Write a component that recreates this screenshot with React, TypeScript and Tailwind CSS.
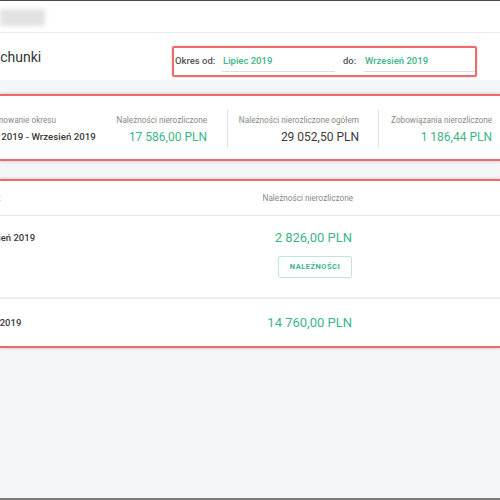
import React from "react";

const green = "text-[#3bb58a]";

export default function App() {
  return (
    <div
      className="w-[500px] h-[500px] overflow-hidden bg-[#f4f5f7] border-t border-[#4a4a4a] border-b-2 border-b-[#7a7a7a] flex flex-col"
      style={{ fontFamily: "Roboto, 'Noto Sans', sans-serif" }}
    >
      {/* top header */}
      <div className="h-[32px] shrink-0 bg-white border-b border-[#ececec] flex items-start">
        <div className="mt-[8px] w-[45px] h-[17px] bg-[#e2e2e2] blur-[2px] rounded-[2px]" />
      </div>

      {/* title bar */}
      <div className="h-[47px] shrink-0 bg-white flex items-start justify-between">
        <div className="mt-[14px] -ml-[16px] text-[14px] leading-[20px] text-[#333]">Rachunki</div>
        <div className="mt-[13px] mr-[23px] w-[305px] h-[31px] border-2 border-[#ee6b6b] rounded-[2px] shadow-[0_0_3px_rgba(0,0,0,0.2)] flex items-start text-[9.5px] font-medium">
          <span className="mt-[7px] ml-[1px] w-[47px] leading-[12px] text-[#555]">Okres od:</span>
          <div className="w-[113px] h-[24px] border-b-[1.5px] border-[#dedede] flex items-start">
            <span className={`mt-[7px] ml-[1px] leading-[12px] ${green}`}>Lipiec 2019</span>
          </div>
          <span className="mt-[7px] ml-[8px] w-[21px] leading-[12px] text-[#555]">do:</span>
          <div className="flex-1 h-[24px] border-b-[1.5px] border-[#dedede] flex items-start">
            <span className={`mt-[7px] ml-[1px] leading-[12px] ${green}`}>Wrzesień 2019</span>
          </div>
        </div>
      </div>

      {/* summary card */}
      <div className="mt-[14px] shrink-0 bg-white border-y-2 border-[#ec6a6a] shadow-[0_0_3px_rgba(0,0,0,0.25)]">
        <div className="h-[63px] flex items-start pt-[14px]">
          <div className="w-[137px] -ml-[27px] h-[37px] pt-[5px]">
            <div className="text-[8.2px] leading-[10px] text-[#888] whitespace-nowrap">Podsumowanie okresu</div>
            <div className="mt-[5px] text-[9.7px] leading-[14px] font-medium text-[#3a3a3a] whitespace-nowrap">
              Lipiec 2019 - Wrzesień 2019
            </div>
          </div>
          <div className="w-[118px] h-[37px] pt-[5px] pr-[20px] text-right border-r border-[#e2e2e2]">
            <div className="text-[8.2px] leading-[10px] text-[#888] whitespace-nowrap">Należności nierozliczone</div>
            <div className={`mt-[5px] text-[12px] leading-[14px] whitespace-nowrap ${green}`}>17 586,00 PLN</div>
          </div>
          <div className="w-[151px] h-[37px] pt-[5px] pr-[19px] text-right border-r border-[#e2e2e2]">
            <div className="text-[8.2px] leading-[10px] text-[#888] whitespace-nowrap">Należności nierozliczone ogółem</div>
            <div className="mt-[5px] text-[12px] leading-[14px] text-[#3a3a3a] whitespace-nowrap">29 052,50 PLN</div>
          </div>
          <div className="w-[121px] h-[37px] pt-[5px] pr-[8px] text-right">
            <div className="text-[8.2px] leading-[10px] text-[#888] whitespace-nowrap">Zobowiązania nierozliczone</div>
            <div className={`mt-[5px] text-[12px] leading-[14px] whitespace-nowrap ${green}`}>1 186,44 PLN</div>
          </div>
        </div>
      </div>

      {/* table card */}
      <div className="mt-[18px] shrink-0 bg-white border-y-2 border-[#ec6a6a] shadow-[0_0_3px_rgba(0,0,0,0.25)]">
        <div className="h-[35px] border-b border-[#e6e6e6] flex items-center text-[8.2px] text-[#888]">
          <div className="w-[40px] -ml-[39px] text-right whitespace-nowrap">Okres:</div>
          <div className="w-[352px] text-right whitespace-nowrap">Należności nierozliczone</div>
        </div>
        <div className="h-[83px] border-b-2 border-[#eeeeee] flex items-start pt-[14px]">
          <div className="w-[200px] -ml-[28px] text-[9.5px] leading-[16px] font-medium text-[#3a3a3a] whitespace-nowrap">
            Wrzesień 2019
          </div>
          <div className="w-[180px] flex flex-col items-end">
            <div className={`text-[13px] leading-[16px] whitespace-nowrap ${green}`}>2 826,00 PLN</div>
            <div className="mt-[10px] w-[74px] h-[22px] border border-[#bfe6d6] rounded-[2px] flex items-center justify-center text-[7.5px] font-bold tracking-[0.5px] text-[#3bb58a]">
              NALEŻNOŚCI
            </div>
          </div>
        </div>
        <div className="h-[47px] flex items-center">
          <div className="w-[200px] -ml-[28px] text-[9.5px] leading-[16px] font-medium text-[#3a3a3a] whitespace-nowrap">
            Lipiec 2019
          </div>
          <div className="w-[180px] flex justify-end">
            <div className={`text-[13px] leading-[16px] whitespace-nowrap ${green}`}>14 760,00 PLN</div>
          </div>
        </div>
      </div>
    </div>
  );
}
